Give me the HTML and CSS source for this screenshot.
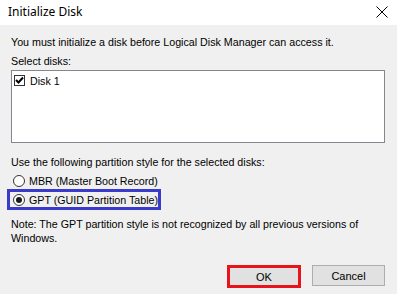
FILE: index.html
```html
<!DOCTYPE html>
<html>
<head>
<meta charset="utf-8">
<link rel="stylesheet" href="styles.css">
</head>
<body>
<div class="dialog">
  <div class="titlebar">
    <span class="title">Initialize Disk</span>
    <svg class="close" width="12" height="12" viewBox="0 0 12 12"><path d="M0.5 0.5L11.5 11.5M11.5 0.5L0.5 11.5" stroke="#000" stroke-width="1" fill="none"/></svg>
  </div>
  <div class="body">
    <p class="line intro">You must initialize a disk before Logical Disk Manager can access it.</p>
    <p class="line label">Select disks:</p>
    <div class="listbox">
      <div class="item">
        <span class="check"><svg width="9" height="9" viewBox="0 0 9 9"><path d="M1 4L3.5 6.5L8 1.5" stroke="#000" stroke-width="2" fill="none"/></svg></span>
        <span>Disk 1</span>
      </div>
    </div>
    <p class="line label2">Use the following partition style for the selected disks:</p>
    <div class="radios">
      <div class="radio"><span class="dot"></span><span>MBR (Master Boot Record)</span></div>
      <div class="radio selected"><span class="dot on"></span><span>GPT (GUID Partition Table)</span></div>
    </div>
    <p class="line note">Note: The GPT partition style is not recognized by all previous versions of Windows.</p>
    <div class="buttons">
      <button class="btn ok">OK</button>
      <button class="btn">Cancel</button>
    </div>
  </div>
</div>
</body>
</html>
```
FILE: styles.css
```css
html, body { margin: 0; padding: 0; }
body {
  width: 397px; height: 294px; overflow: hidden;
  font-family: "Liberation Sans", Arial, sans-serif;
  font-size: 10.7px; color: #000; background: #f0f0f0;
}
.dialog { width: 397px; height: 294px; display: flex; flex-direction: column; }
.titlebar {
  height: 25px; background: #fff; display: flex; align-items: center;
  justify-content: space-between; padding: 0 9px 0 8px; box-sizing: border-box;
}
.title { font-size: 12px; font-family: "Noto Sans", "Liberation Sans", sans-serif; position: relative; top: -1px; }
.close { position: relative; top: -1px; }
.body { flex: 1; padding: 0 12px 0 11px; display: flex; flex-direction: column; }
.line { margin: 0; line-height: 13px; }
.intro { margin-top: 11px; }
.label { margin-top: 6px; }
.listbox {
  margin-top: 2px; height: 73px; background: #fff; border: 1px solid #828790;
  box-sizing: border-box; padding: 3px 2px;
}
.item { display: flex; align-items: center; gap: 5px; height: 13px; }
.check {
  width: 11px; height: 11px; border: 1px solid #333; box-sizing: border-box;
  display: flex; align-items: center; justify-content: center; background: #fff;
}
.check svg { display: block; }
.label2 { margin-top: 13px; }
.radios { margin-top: 3px; display: flex; flex-direction: column; margin-left: -4px; }
.radio { display: flex; align-items: center; gap: 4px; height: 17px; padding-left: 6px; box-sizing: border-box; width: max-content; }
.radio.selected { border: 3px solid #3b3bcb; padding-left: 3px; height: 21px; padding-right: 0; }
.dot {
  width: 12px; height: 12px; border-radius: 50%; border: 1px solid #333; box-sizing: border-box;
  background: #fff; display: flex; align-items: center; justify-content: center;
}
.dot.on::after { content: ""; width: 6px; height: 6px; border-radius: 50%; background: #1a1a1a; }
.note { margin-top: 7px; width: 360px; line-height: 14px; }
.buttons { margin-top: auto; margin-bottom: 6px; display: flex; justify-content: flex-end; gap: 11px; }
.btn {
  width: 73px; height: 21px; background: #e1e1e1; border: 1px solid #adadad;
  font-family: "Liberation Sans", Arial, sans-serif; font-size: 11px; color: #000; padding: 0;
}
.btn.ok { border: 3px solid #e8141c; width: 74px; height: 23px; }
```
